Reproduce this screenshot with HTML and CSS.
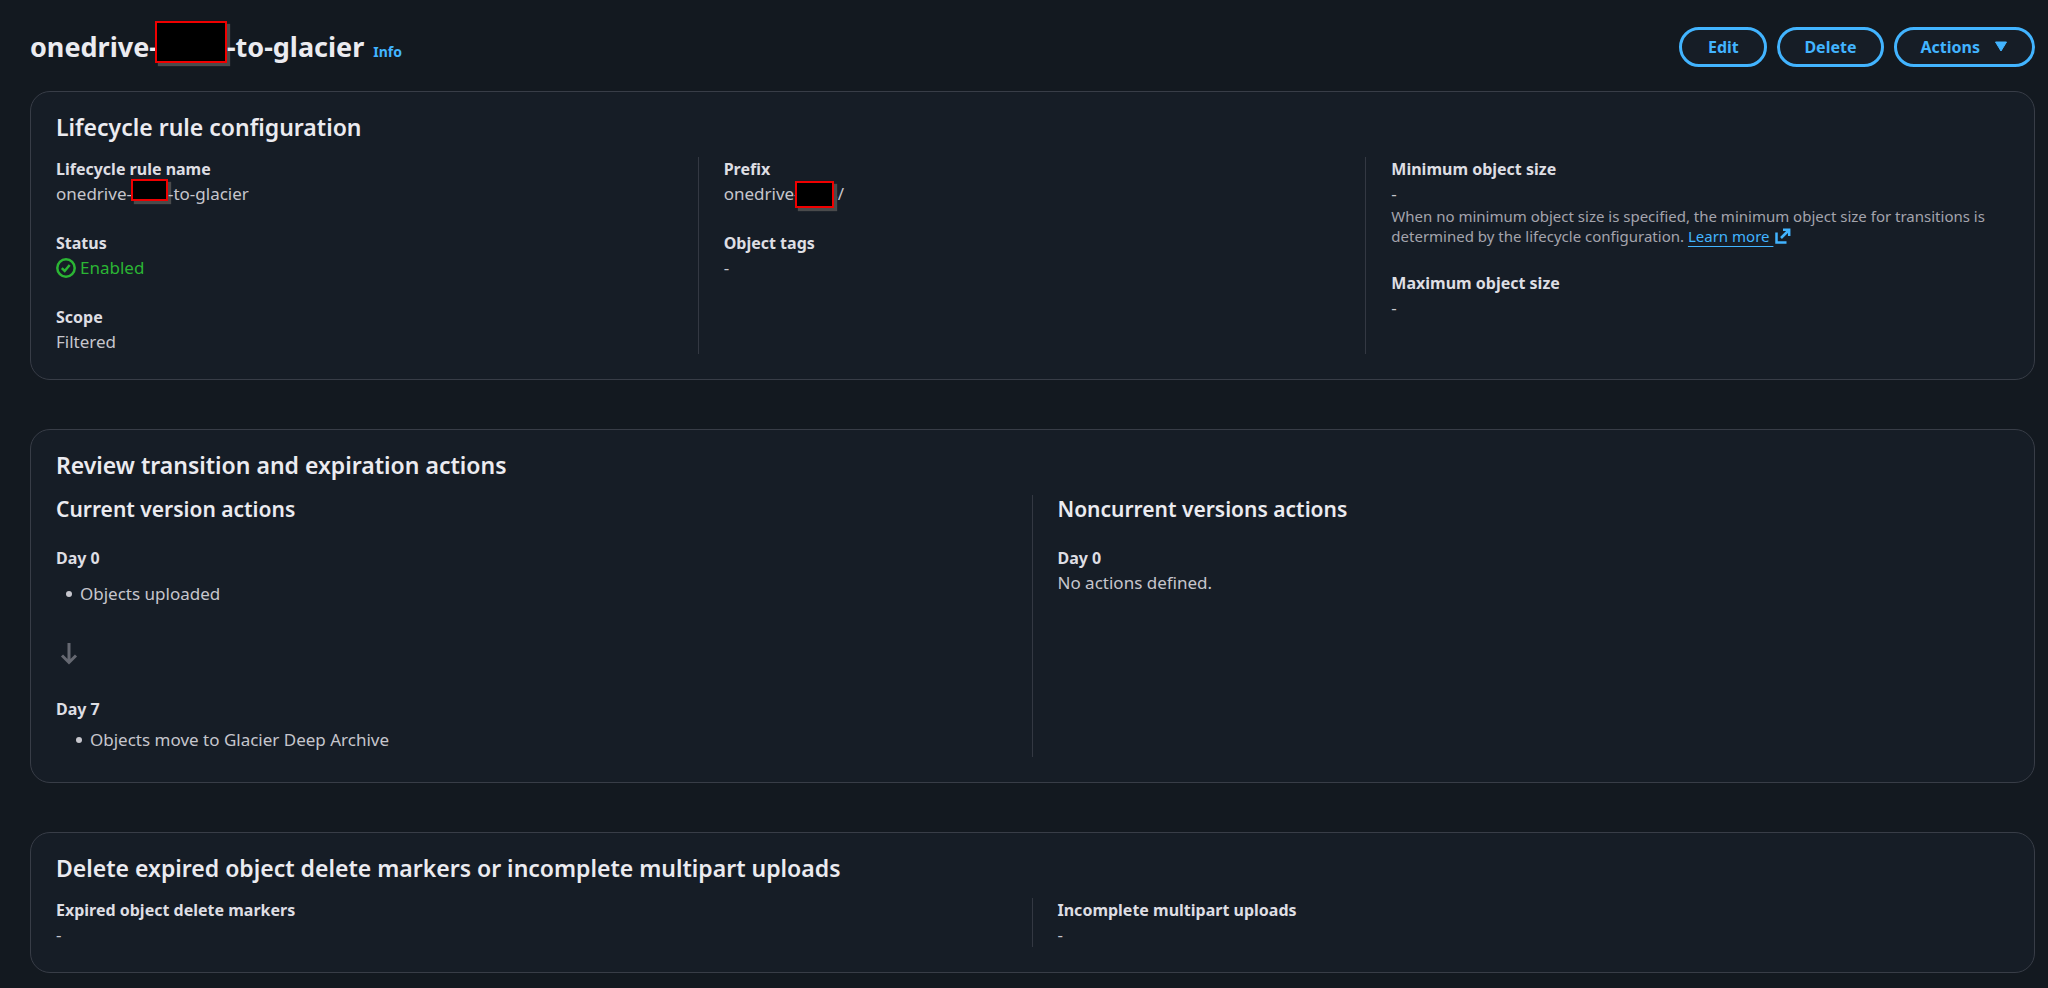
FILE: index.html
```html
<!DOCTYPE html>
<html lang="en">
<head>
<meta charset="utf-8">
<title>Lifecycle rule</title>
<link rel="stylesheet" href="styles.css">
</head>
<body>
<main class="page">
  <header class="page-header">
    <h1 class="page-title">onedrive-<span class="redacted redacted-title"></span>-to-glacier <a class="info" href="#info">Info</a></h1>
    <div class="actions">
      <button class="button" type="button">Edit</button>
      <button class="button" type="button">Delete</button>
      <button class="button" type="button">Actions
        <svg class="caret" viewBox="0 0 14 12" aria-hidden="true"><path d="M1.5 1h11L7 10z"/></svg>
      </button>
    </div>
  </header>

  <section class="card">
    <h2 class="card-title">Lifecycle rule configuration</h2>
    <div class="columns columns-three">
      <dl class="column">
        <div><dt>Lifecycle rule name</dt><dd>onedrive-<span class="redacted redacted-name"></span>-to-glacier</dd></div>
        <div>
          <dt>Status</dt>
          <dd class="status">
            <svg class="status-icon" viewBox="0 0 20 20" aria-hidden="true"><circle cx="10" cy="10" r="8.7"/><path d="M5.8 10.2l2.9 2.8 5-6"/></svg>
            Enabled
          </dd>
        </div>
        <div><dt>Scope</dt><dd>Filtered</dd></div>
      </dl>
      <dl class="column">
        <div><dt>Prefix</dt><dd>onedrive-<span class="redacted redacted-prefix"></span>s/</dd></div>
        <div><dt>Object tags</dt><dd>-</dd></div>
      </dl>
      <dl class="column">
        <div>
          <dt>Minimum object size</dt>
          <dd>-</dd>
          <dd class="description">When no minimum object size is specified, the minimum object size for transitions is determined by the lifecycle configuration. <a class="external" href="#learn"><span class="external-label">Learn more&nbsp;</span><svg class="external-icon" viewBox="0 0 16 16" aria-hidden="true"><path d="M1.5 4.5v10h10M8 1.8h6.2V8M14 2L6 10"/></svg></a></dd>
        </div>
        <div><dt>Maximum object size</dt><dd>-</dd></div>
      </dl>
    </div>
  </section>

  <section class="card">
    <h2 class="card-title">Review transition and expiration actions</h2>
    <div class="columns columns-two">
      <div class="timeline">
        <h3 class="timeline-title">Current version actions</h3>
        <h4 class="day">Day 0</h4>
        <ul class="events events-first"><li>Objects uploaded</li></ul>
        <svg class="arrow" viewBox="0 0 26 26" aria-hidden="true"><path d="M13 2v20M6 14.5l7 7 7-7"/></svg>
        <h4 class="day">Day 7</h4>
        <ul class="events events-last"><li>Objects move to Glacier Deep Archive</li></ul>
      </div>
      <div class="timeline">
        <h3 class="timeline-title">Noncurrent versions actions</h3>
        <h4 class="day">Day 0</h4>
        <p class="empty">No actions defined.</p>
      </div>
    </div>
  </section>

  <section class="card">
    <h2 class="card-title">Delete expired object delete markers or incomplete multipart uploads</h2>
    <div class="columns columns-two">
      <dl class="column"><div><dt>Expired object delete markers</dt><dd>-</dd></div></dl>
      <dl class="column"><div><dt>Incomplete multipart uploads</dt><dd>-</dd></div></dl>
    </div>
  </section>
</main>
</body>
</html>
```
FILE: styles.css
```css
* { box-sizing: border-box; }

body, h1, h2, h3, h4, dl, dd, ul, p { margin: 0; }

body {
  background: #131920;
  color: #c6c6cd;
  font: 17px/25px "Noto Sans", "Open Sans", sans-serif;
}

.page {
  display: flex;
  flex-direction: column;
  gap: 49px;
  padding: 27px 13px 14px 30px;
}

.page-header {
  display: flex;
  align-items: flex-start;
  justify-content: space-between;
  margin-bottom: -25px;
}

.page-title {
  height: 40px;
  color: #ebebf0;
  font-size: 27px;
  font-weight: 700;
  line-height: 40px;
  white-space: nowrap;
}

.info {
  margin-left: 2px;
  color: #42b4ff;
  font-size: 14px;
  line-height: 20px;
  text-decoration: none;
}

.redacted {
  display: inline-block;
  background: #000;
  border: 2px solid #f00000;
  box-shadow: 3px 3px 1px #4a4b4c;
  vertical-align: top;
}

.redacted-title { width: 72px; height: 42px; margin: -6px 0 -6px -3px; }
.redacted-name { width: 37px; height: 22px; margin: -2px 0 -5px -1px; }
.redacted-prefix { position: relative; width: 39px; height: 27px; margin: 0 -4px -10px -5px; }

.actions { display: flex; gap: 10px; }

.button {
  display: flex;
  align-items: center;
  justify-content: center;
  gap: 14px;
  min-width: 88px;
  height: 40px;
  padding: 0 24px;
  background: #161d26;
  border: 3px solid #42b4ff;
  border-radius: 20px;
  color: #42b4ff;
  font: 700 16px/25px "Noto Sans", "Open Sans", sans-serif;
}

.caret { width: 14px; height: 12px; fill: currentColor; stroke: currentColor; stroke-linejoin: round; }

.card {
  padding: 20px 25px 25px;
  background: #161d26;
  border: 1px solid #383d47;
  border-radius: 20px;
}

.card-title {
  margin-bottom: 15px;
  color: #ebebf0;
  font-size: 23px;
  font-weight: 600;
  line-height: 30px;
}

.columns { display: grid; column-gap: 50px; }
.columns-three { grid-template-columns: repeat(3, minmax(0, 1fr)); }
.columns-two { grid-template-columns: repeat(2, minmax(0, 1fr)); }

.columns > * + * {
  margin-left: -26px;
  padding-left: 25px;
  border-left: 1px solid #333842;
}

.column { display: flex; flex-direction: column; gap: 25px; }

dt, .day {
  color: #dedee3;
  font-size: 16px;
  font-weight: 700;
  line-height: 24px;
}

.status { display: flex; align-items: center; gap: 4px; color: #2bb534; }
.status-icon { width: 20px; height: 20px; fill: none; stroke: currentColor; stroke-width: 2.5; }

.description { color: #a4a4ad; font-size: 15px; line-height: 20px; }
.external { display: inline-flex; align-items: center; gap: 2px; color: #42b4ff; text-decoration: none; vertical-align: top; }
.external-label { text-decoration: underline; text-underline-offset: 4px; }
.external-icon { width: 16px; height: 16px; fill: none; stroke: currentColor; stroke-width: 2.5; }

.timeline { padding-bottom: 5px; }

.timeline-title {
  margin-bottom: 23px;
  color: #ebebf0;
  font-size: 21px;
  font-weight: 600;
  line-height: 28px;
}

.events { list-style: none; }
.events li { display: flex; align-items: center; gap: 8px; }
.events li::before { content: ""; width: 6px; height: 6px; background: #c6c6cd; border-radius: 50%; }
.events-first { margin-top: 11px; padding-left: 10px; }
.events-last { margin-top: 6px; padding-left: 20px; }

.arrow {
  display: block;
  width: 26px;
  height: 26px;
  margin: 35px 0 30px;
  fill: none;
  stroke: #656871;
  stroke-width: 3;
}
```
